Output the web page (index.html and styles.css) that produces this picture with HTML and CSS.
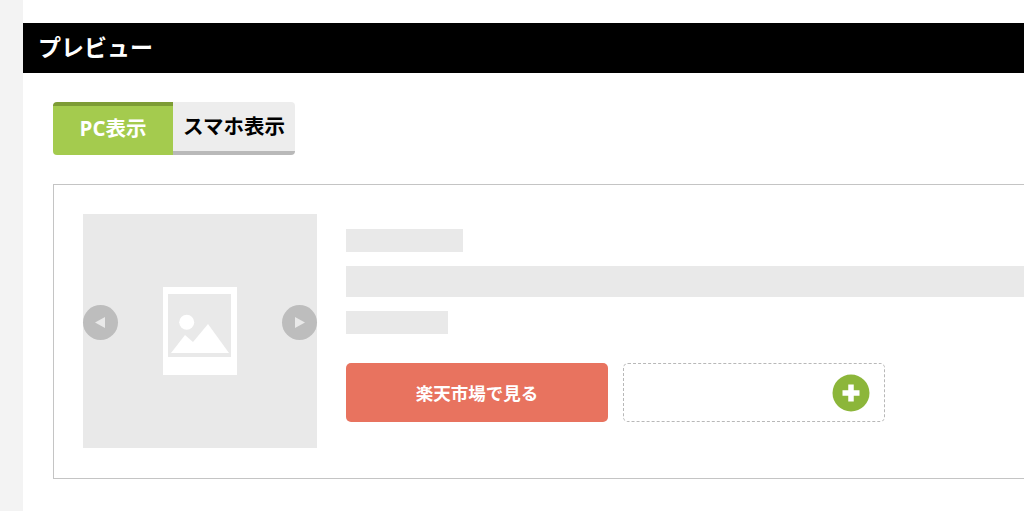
FILE: index.html
```html
<!DOCTYPE html>
<html lang="ja">
<head>
<meta charset="utf-8">
<title>プレビュー</title>
<link rel="stylesheet" href="styles.css">
</head>
<body>
<div class="page">
  <aside class="side"></aside>
  <main class="main">
    <h2 class="head">プレビュー</h2>
    <div class="content">
      <div class="tabs">
        <div class="tab tab-on">PC表示</div>
        <div class="tab tab-off">スマホ表示</div>
      </div>
      <section class="card">
        <div class="gallery">
          <span class="arrow"><svg width="35" height="35" viewBox="0 0 35 35"><path class="tri" d="M12 17.500 22 12V23Z"/></svg></span>
          <svg class="photo" width="74" height="88" viewBox="0 0 74 88">
            <rect class="photo-frame" width="74" height="88"/>
            <rect class="photo-inner" x="5" y="7" width="63" height="63"/>
            <circle class="photo-art" cx="23.700" cy="35.300" r="7.500"/>
            <path class="photo-art" d="M8 66 22 48 30 55 45 37 66 66Z"/>
          </svg>
          <span class="arrow"><svg width="35" height="35" viewBox="0 0 35 35"><path class="tri" d="M23 17.500 13 12V23Z"/></svg></span>
        </div>
        <div class="info">
          <div class="bar bar-title"></div>
          <div class="bar bar-long"></div>
          <div class="bar bar-short"></div>
          <div class="actions">
            <a class="buy">楽天市場で見る</a>
            <div class="add">
              <svg width="38" height="38" viewBox="0 0 38 38"><circle class="add-bg" cx="19" cy="19" r="18.500"/><path class="add-plus" d="M19 10.500V27.500M10.500 19H27.500"/></svg>
            </div>
          </div>
        </div>
      </section>
    </div>
  </main>
</div>
</body>
</html>
```
FILE: styles.css
```css
* { box-sizing: border-box; }
html, body { margin: 0; height: 100%; background: #fff; }
body { font-family: "Open Sans", "Noto Sans CJK JP", sans-serif; overflow: hidden; }
.page { display: flex; width: 1024px; height: 511px; overflow: hidden; }
.side { flex: 0 0 23px; background: #f3f3f3; }
.main { flex: 1; min-width: 0; padding-top: 23px; overflow: hidden; }
.head {
  margin: 0; height: 50px; padding-left: 15px; background: #000; color: #fff;
  font-size: 23px; font-weight: 700; line-height: 48px;
}
.content { padding: 29px 0 0 30px; }
.tabs { display: flex; width: 242px; height: 53px; }
.tab { display: flex; align-items: center; justify-content: center; font-weight: 700; }
.tab-on {
  width: 120px; background: #a4cb4e; color: #fff; border-top: 4px solid #7d9c35;
  border-radius: 4px 0 0 4px; padding-bottom: 8px; font-size: 20.500px;
}
.tab-off {
  width: 122px; background: #ededed; color: #000; border-bottom: 4px solid #b9b9b9;
  border-radius: 0 4px 4px 0; padding-bottom: 3px; font-size: 20.500px;
}
.card {
  display: flex; gap: 29px; width: 1100px; height: 295px; margin-top: 29px;
  padding: 29px; border: 1px solid #c4c4c4;
}
.gallery {
  flex: 0 0 234px; height: 234px; background: #e9e9e9;
  display: flex; align-items: center; justify-content: space-between;
}
.arrow { display: flex; width: 35px; height: 35px; margin-bottom: 17px; }
.tri { fill: #e9e9e9; }
.arrow svg { border-radius: 50%; background: #bdbdbd; }
.photo-frame, .photo-art { fill: #fff; }
.photo-inner { fill: #e9e9e9; }
.info { flex: 1; padding-top: 15px; }
.bar { background: #e9e9e9; }
.bar-title { width: 117px; height: 23px; }
.bar-long { height: 31px; margin-top: 14px; }
.bar-short { width: 102px; height: 23px; margin-top: 14px; }
.actions { display: flex; gap: 15px; margin-top: 29px; }
.buy {
  display: flex; align-items: center; justify-content: center; width: 262px; height: 59px;
  background: #e8735f; color: #fff; border-radius: 5px; font-size: 17.500px; font-weight: 700;
}
.add {
  display: flex; align-items: center; justify-content: flex-end; width: 262px; height: 59px;
  padding-right: 14px; border: 1px dashed #b8b8b8; border-radius: 5px;
}
.add-bg { fill: #8cb63a; }
.add-plus { fill: none; stroke: #fff; stroke-width: 5.500; }
```
